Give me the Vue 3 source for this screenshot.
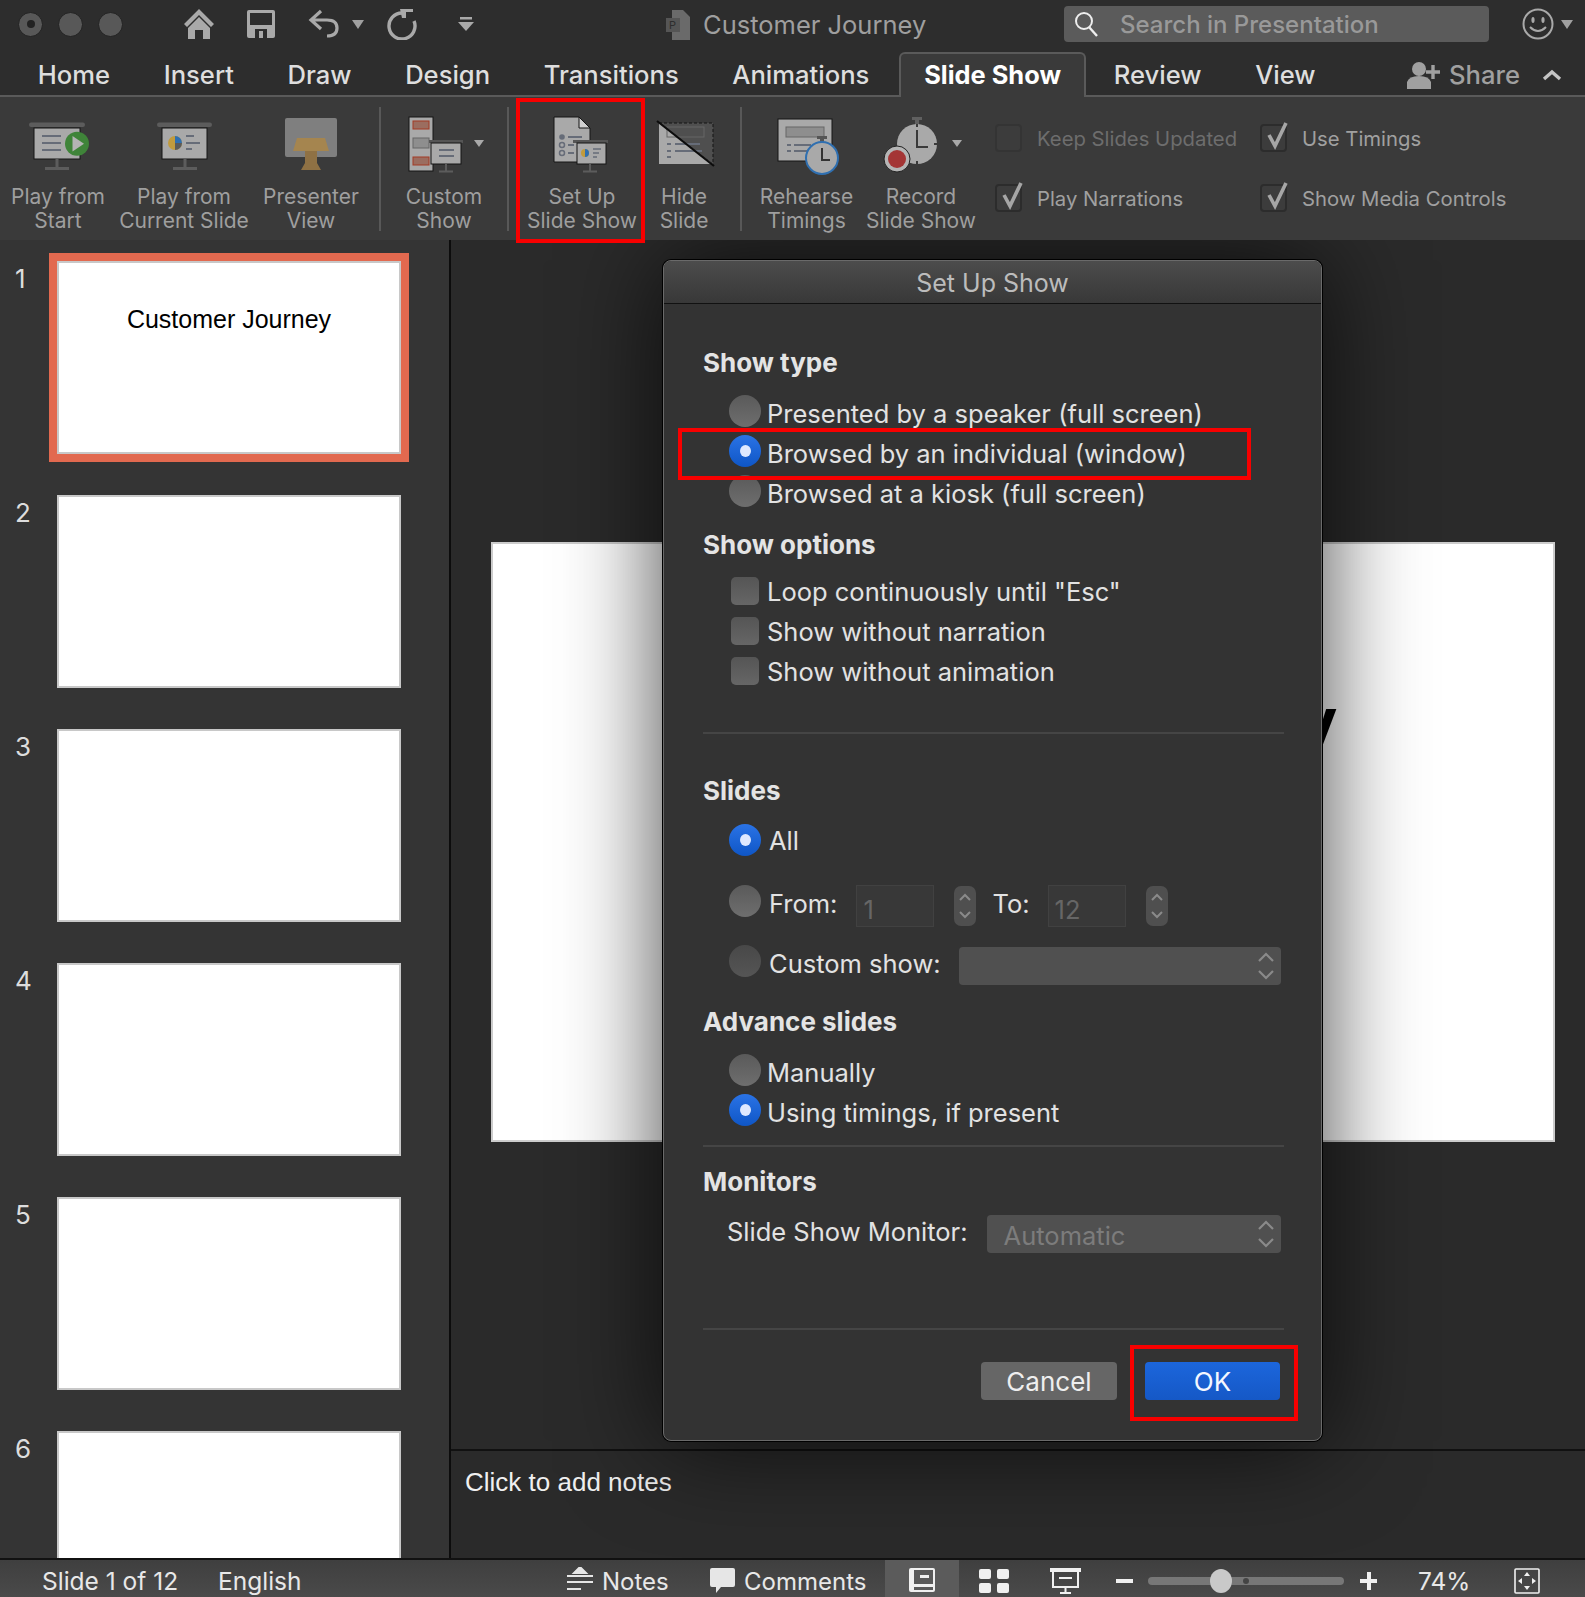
<template>
  <div class="app">
    <!-- title bar -->
    <header class="titlebar">
      <div class="lights">
        <span class="light"><i></i></span>
        <span class="light"></span>
        <span class="light"></span>
      </div>
      <div class="quick">
        <svg class="q-home" width="32" height="32" viewBox="0 0 32 32">
          <path d="M16 1 L1 16 L4 19 L16 7 L28 19 L31 16 Z" fill="#a9a9a9" />
          <path d="M5 20 L16 9 L27 20 V31 H20 V22 H12 V31 H5 Z" fill="#a9a9a9" />
        </svg>
        <svg class="q-save" width="30" height="30" viewBox="0 0 30 30">
          <path d="M1 3 Q1 1 3 1 H27 Q29 1 29 3 V27 Q29 29 27 29 H3 Q1 29 1 27 Z" fill="#a9a9a9" />
          <rect x="4" y="4" width="22" height="12" fill="#2d2d2d" />
          <rect x="9" y="20" width="12" height="9" fill="#2d2d2d" />
          <rect x="13" y="22" width="4" height="7" fill="#a9a9a9" />
        </svg>
        <svg class="q-undo" width="32" height="30" viewBox="0 0 32 30">
          <path d="M13 2 L3 11 L13 20 M3 11 H19 Q29 11 29 19 Q29 27 19 27" fill="none" stroke="#a9a9a9" stroke-width="3.2" />
        </svg>
        <span class="caret q-caret"></span>
        <svg class="q-redo" width="32" height="32" viewBox="0 0 32 32">
          <path d="M15 5 A13 13 0 1 0 27 13" fill="none" stroke="#a9a9a9" stroke-width="3.4" />
          <path d="M13 1 H26 V4 H19 V10 H15 Z" fill="#a9a9a9" />
        </svg>
        <svg class="q-more" width="16" height="16" viewBox="0 0 16 16">
          <rect x="2" y="1" width="12" height="2.5" fill="#a9a9a9" />
          <path d="M0 6 H16 L8 15 Z" fill="#a9a9a9" />
        </svg>
      </div>
      <div class="doc-title">
        <svg width="24" height="30" viewBox="0 0 24 30">
          <path d="M6 0 H17 L24 7 V30 H6 Z" fill="#6a6a6a" />
          <rect x="0" y="8" width="14" height="14" fill="#555" />
          <text x="3" y="19" font-size="11" font-family="Inter" fill="#2d2d2d">P</text>
        </svg>
        <span>Customer Journey</span>
      </div>
      <div class="search">
        <svg width="26" height="26" viewBox="0 0 26 26">
          <circle cx="11" cy="10" r="8" fill="none" stroke="#eee" stroke-width="2" />
          <path d="M16 16 L24 25" stroke="#eee" stroke-width="2.4" />
        </svg>
        <span>Search in Presentation</span>
      </div>
      <div class="smiley">
        <svg width="32" height="32" viewBox="0 0 32 32">
          <circle cx="16" cy="16" r="14.5" fill="none" stroke="#a9a9a9" stroke-width="2" />
          <ellipse cx="11" cy="12" rx="1.6" ry="3" fill="#a9a9a9" />
          <ellipse cx="21" cy="12" rx="1.6" ry="3" fill="#a9a9a9" />
          <path d="M8 19 Q16 27 24 19" fill="none" stroke="#a9a9a9" stroke-width="2" />
        </svg>
        <span class="caret"></span>
      </div>
    </header>

    <!-- tabs -->
    <nav class="tabs">
      <span v-for="t in tabs" :key="t" class="tab" :class="{ active: t === 'Slide Show' }">{{ t }}</span>
      <div class="share">
        <svg width="34" height="28" viewBox="0 0 34 28">
          <circle cx="12" cy="8" r="7" fill="#a0a0a0" />
          <path d="M0 28 V21 Q2 15 12 15 Q22 15 24 21 V28 Z" fill="#a0a0a0" />
          <path d="M26 4 V18 M19 11 H33" stroke="#a0a0a0" stroke-width="3.4" />
        </svg>
        <span>Share</span>
        <svg class="collapse" width="20" height="12" viewBox="0 0 20 12">
          <path d="M2 10 L10 3 L18 10" fill="none" stroke="#c4c4c4" stroke-width="3.4" />
        </svg>
      </div>
    </nav>

    <!-- ribbon -->
    <section class="ribbon">
      <div class="rb w116">
        <svg class="ico" width="80" height="64" viewBox="0 0 80 64">
          <rect x="11" y="6.5" width="56" height="4.5" rx="2.2" fill="#5c5c5c" />
          <rect x="16" y="12" width="46" height="31" fill="#a9a9a9" stroke="#151515" />
          <path d="M39 43 V52 M27 52.5 H51" stroke="#5c5c5c" stroke-width="3" />
          <path d="M24 20 H43 M24 27 H43 M24 34 H43" stroke="#666c78" stroke-width="2" />
          <circle cx="59" cy="27.7" r="12" fill="#3f8439" />
          <path d="M54.5 20 L66 27.7 L54.5 35.5 Z" fill="#b4b4b4" />
        </svg>
        <span>Play from<br />Start</span>
      </div>
      <div class="rb w136">
        <svg class="ico" width="80" height="64" viewBox="0 0 80 64">
          <rect x="13" y="6.5" width="55" height="4.5" rx="2.2" fill="#5c5c5c" />
          <rect x="18" y="12" width="45" height="31" fill="#a9a9a9" stroke="#151515" />
          <path d="M41 43 V52 M29 52.5 H53" stroke="#5c5c5c" stroke-width="3" />
          <circle cx="31" cy="27" r="7" fill="#c19b3d" />
          <path d="M31 20 A7 7 0 0 1 38 27 H31 Z" fill="#2f6fb0" />
          <path d="M31 27 H38 A7 7 0 0 1 31 34 Z" fill="#5a5a5a" />
          <path d="M42 20 H50 M42 27 H56 M42 33 H48" stroke="#666c78" stroke-width="2" />
        </svg>
        <span>Play from<br />Current Slide</span>
      </div>
      <div class="rb w118">
        <svg class="ico" width="80" height="64" viewBox="0 0 80 64">
          <rect x="14" y="2" width="52" height="39" rx="2" fill="#7f7f7f" />
          <path d="M26 22 H54 L58 35 H22 Z" fill="#a5854f" />
          <path d="M34 35 H46 V47 L50 54 H30 L34 47 Z" fill="#8f7144" />
        </svg>
        <span>Presenter<br />View</span>
      </div>
      <div class="rb-sep"></div>
      <div class="rb w106">
        <svg class="ico" width="80" height="64" viewBox="0 0 80 64">
          <rect x="5" y="1" width="24" height="54" fill="#a9a9a9" stroke="#151515" />
          <rect x="9" y="5" width="16" height="8" fill="#9b6d60" stroke="#a33b25" />
          <rect x="9" y="22" width="16" height="10" fill="#8e8e8e" stroke="#666" />
          <rect x="9" y="41" width="16" height="8" fill="#9b6d60" stroke="#a33b25" />
          <rect x="25" y="24" width="34" height="3" fill="#555" />
          <rect x="27" y="27" width="30" height="21" fill="#a9a9a9" stroke="#151515" />
          <path d="M35 34 H50 M35 40 H50" stroke="#666c78" stroke-width="2" />
          <path d="M42 48 V55 M35 55.5 H49" stroke="#5c5c5c" stroke-width="2" />
          <path d="M70 24 H80 L75 31 Z" fill="#a9a9a9" />
        </svg>
        <span>Custom<br />Show</span>
      </div>
      <div class="rb-sep sep2"></div>
      <div class="rb w124">
        <svg class="ico" width="80" height="64" viewBox="0 0 80 64">
          <path d="M12 1 H37 L48 12 V46 H12 Z" fill="#a9a9a9" stroke="#151515" />
          <path d="M37 1 V12 H48 Z" fill="#d0d0d0" stroke="#151515" />
          <circle cx="20" cy="21" r="2.8" fill="#666c78" />
          <circle cx="20" cy="29" r="2.5" fill="none" stroke="#666c78" stroke-width="1.5" />
          <circle cx="20" cy="37" r="2.5" fill="none" stroke="#666c78" stroke-width="1.5" />
          <path d="M26 21 H40 M26 29 H32 M26 37 H32" stroke="#666c78" stroke-width="1.8" />
          <rect x="31" y="24" width="35" height="3" fill="#555" />
          <rect x="35" y="27" width="29" height="21" fill="#a9a9a9" stroke="#151515" />
          <circle cx="43" cy="37" r="4" fill="#c19b3d" />
          <path d="M43 33 A4 4 0 0 1 43 41 Z" fill="#2f6fb0" />
          <path d="M51 33 H59 M51 37 H57 M51 41 H55" stroke="#666c78" stroke-width="1.6" />
          <path d="M48 48 V55 M41 55.5 H55" stroke="#5c5c5c" stroke-width="2" />
        </svg>
        <span>Set Up<br />Slide Show</span>
      </div>
      <div class="rb w80">
        <svg class="ico" width="80" height="64" viewBox="0 0 80 64">
          <path d="M15 7 H69 V48 Z" fill="#4f4f4f" stroke="#151515" stroke-dasharray="3 2" />
          <path d="M15 7 V48 H69 Z" fill="#a9a9a9" />
          <rect x="23" y="11" width="37" height="10" fill="none" stroke="#666" />
          <path d="M23 28 H27 M31 28 H56 M23 35 H27 M31 35 H58 M23 41 H27" stroke="#666c78" stroke-width="1.8" />
          <path d="M13 5 L70 50" stroke="#0c0c0c" stroke-width="2.2" />
        </svg>
        <span>Hide<br />Slide</span>
      </div>
      <div class="rb-sep sep3"></div>
      <div class="rb w99">
        <svg class="ico" width="80" height="64" viewBox="0 0 80 64">
          <rect x="11" y="3" width="54" height="42" fill="#a9a9a9" stroke="#151515" />
          <rect x="19" y="11" width="38" height="10" fill="#8e8e8e" stroke="#666" />
          <path d="M20 29 H24 M27 29 H44 M20 35 H24 M27 35 H40" stroke="#666c78" stroke-width="1.8" />
          <rect x="50" y="20" width="10" height="3" fill="#555" />
          <rect x="53" y="23" width="4" height="4" fill="#555" />
          <circle cx="55" cy="42" r="16" fill="#a9a9a9" stroke="#2f6fb0" stroke-width="2" />
          <path d="M55 32 V44 H63" fill="none" stroke="#333" stroke-width="2" />
        </svg>
        <span>Rehearse<br />Timings</span>
      </div>
      <div class="rb w130">
        <svg class="ico" width="80" height="64" viewBox="0 0 80 64">
          <rect x="31" y="1" width="10" height="3" fill="#606060" />
          <rect x="34" y="4" width="4" height="5" fill="#606060" />
          <circle cx="36" cy="28" r="20" fill="#a9a9a9" />
          <path d="M36 14 V31 H47" fill="none" stroke="#3a3a3a" stroke-width="2" />
          <path d="M36 8 V11 M36 45 V48 M53 28 H56" stroke="#3a3a3a" stroke-width="2" />
          <circle cx="16" cy="43" r="13" fill="#b5b5b5" stroke="#222" />
          <circle cx="16" cy="43" r="9" fill="#a43535" />
          <path d="M71 24 H81 L76 31 Z" fill="#a9a9a9" />
        </svg>
        <span>Record<br />Slide Show</span>
      </div>
      <div class="opts">
        <label v-for="o in ribbonOpts" :key="o.label" class="opt" :class="{ off: o.off }">
          <span class="opt-box">
            <svg v-if="!o.off" width="26" height="30" viewBox="0 0 26 30">
              <path d="M6 14 L12 25 L23 2" fill="none" stroke="#a6a6a6" stroke-width="3.6" />
            </svg>
          </span>
          {{ o.label }}
        </label>
      </div>
    </section>

    <!-- body -->
    <div class="main">
      <aside class="sidebar">
        <div v-for="n in 6" :key="n" class="thumb-row">
          <span class="num">{{ n }}</span>
          <div class="thumb" :class="{ selected: n === 1 }">
            <span v-if="n === 1">Customer Journey</span>
          </div>
        </div>
      </aside>

      <div class="workspace">
        <div class="canvas">
          <div class="slide"><h1>Customer Journey</h1></div>
        </div>
        <div class="notes">Click to add notes</div>

        <div class="dialog">
          <div class="dlg-title">Set Up Show</div>
          <div class="dlg-body">
            <h3 class="h-first">Show type</h3>
            <div class="group g1">
              <div v-for="r in showTypes" :key="r.label" class="row">
                <span class="radio up" :class="{ on: r.on }"></span>{{ r.label }}
              </div>
            </div>

            <h3 class="h-opts">Show options</h3>
            <div class="group g2">
              <div v-for="c in showOptions" :key="c" class="row">
                <span class="check"></span>{{ c }}
              </div>
            </div>
            <div class="rule r1"></div>

            <h3 class="h-slides">Slides</h3>
            <div class="group g3">
              <div class="row wide"><span class="radio on"></span>All</div>
              <div class="row wide from">
                <span class="radio up"></span>From:
                <span class="field f1">1</span>
                <span class="stepper">
                  <svg width="12" height="32" viewBox="0 0 12 32">
                    <path d="M1 10 L6 5 L11 10 M1 22 L6 27 L11 22" fill="none" stroke="#8a8a8a" stroke-width="2" />
                  </svg>
                </span>
                <span class="to">To:</span>
                <span class="field f2">12</span>
                <span class="stepper">
                  <svg width="12" height="32" viewBox="0 0 12 32">
                    <path d="M1 10 L6 5 L11 10 M1 22 L6 27 L11 22" fill="none" stroke="#8a8a8a" stroke-width="2" />
                  </svg>
                </span>
              </div>
              <div class="row wide custom">
                <span class="radio up dim"></span>Custom show:
                <span class="select sel-custom">
                  <svg class="updown" width="16" height="30" viewBox="0 0 16 30">
                    <path d="M1 10 L8 3 L15 10 M1 20 L8 27 L15 20" fill="none" stroke="#8a8a8a" stroke-width="2.2" />
                  </svg>
                </span>
              </div>
            </div>

            <h3 class="h-adv">Advance slides</h3>
            <div class="group g4">
              <div class="row"><span class="radio up"></span>Manually</div>
              <div class="row"><span class="radio up on"></span>Using timings, if present</div>
            </div>
            <div class="rule r2"></div>

            <h3 class="h-mon">Monitors</h3>
            <div class="row monitor">
              Slide Show Monitor:
              <span class="select sel-mon">Automatic
                <svg class="updown" width="16" height="30" viewBox="0 0 16 30">
                  <path d="M1 10 L8 3 L15 10 M1 20 L8 27 L15 20" fill="none" stroke="#8a8a8a" stroke-width="2.2" />
                </svg>
              </span>
            </div>
            <div class="rule r3"></div>

            <div class="buttons">
              <button class="btn">Cancel</button>
              <button class="btn primary">OK</button>
            </div>
          </div>
        </div>
      </div>
    </div>

    <!-- status bar -->
    <footer class="status">
      <span class="st-slide">Slide 1 of 12</span>
      <span class="st-lang">English</span>
      <svg class="st-notes" width="28" height="26" viewBox="0 0 28 26">
        <path d="M14 0 L20 6 H8 Z M1 9 H27 M1 15 H27 M1 22 H15" fill="#e6e6e6" stroke="#e6e6e6" stroke-width="2" />
      </svg>
      <span class="st-label">Notes</span>
      <svg class="st-comments" width="27" height="27" viewBox="0 0 27 27">
        <path d="M3 1 H24 Q26 1 26 3 V18 Q26 20 24 20 H12 L7 26 V20 H3 Q1 20 1 18 V3 Q1 1 3 1 Z" fill="#e6e6e6" />
      </svg>
      <span class="st-label st-c">Comments</span>
      <div class="view-btn">
        <svg width="28" height="26" viewBox="0 0 28 26">
          <rect x="1" y="1" width="26" height="24" rx="2" fill="#f0f0f0" />
          <rect x="6" y="3" width="19" height="14" fill="#5a5a5a" />
          <rect x="12" y="8" width="9" height="3" fill="#f0f0f0" />
          <rect x="6" y="20" width="19" height="3" fill="#5a5a5a" />
        </svg>
      </div>
      <svg class="st-grid" width="30" height="24" viewBox="0 0 30 24">
        <rect x="0" y="0" width="12" height="10" rx="2" fill="#f0f0f0" />
        <rect x="18" y="0" width="12" height="10" rx="2" fill="#f0f0f0" />
        <rect x="0" y="14" width="12" height="10" rx="2" fill="#f0f0f0" />
        <rect x="18" y="14" width="12" height="10" rx="2" fill="#f0f0f0" />
      </svg>
      <svg class="st-show" width="31" height="26" viewBox="0 0 31 26">
        <rect x="0" y="0" width="31" height="4" fill="#f0f0f0" />
        <path d="M3 3 V19 H28 V3" fill="none" stroke="#f0f0f0" stroke-width="2" />
        <path d="M9 10 H22 M15.5 19 V25 M10 25 H21" stroke="#f0f0f0" stroke-width="2" />
      </svg>
      <span class="st-minus"></span>
      <div class="zoom-track"><span class="zoom-tick"></span><span class="zoom-thumb"></span></div>
      <span class="st-plus"></span>
      <span class="st-pct">74%</span>
      <svg class="st-fit" width="26" height="26" viewBox="0 0 26 26">
        <rect x="1" y="1" width="24" height="24" rx="1" fill="none" stroke="#f0f0f0" stroke-width="1.6" />
        <path d="M13 4 L10 8 H16 Z M13 22 L10 18 H16 Z M4 13 L8 10 V16 Z M22 13 L18 10 V16 Z" fill="#f0f0f0" />
      </svg>
    </footer>

    <!-- red callouts drawn on top of the screenshot -->
    <div class="mark m-setup"></div>
    <div class="mark m-browsed"></div>
    <div class="mark m-ok"></div>
  </div>
</template>

<script setup>
const tabs = ['Home', 'Insert', 'Draw', 'Design', 'Transitions', 'Animations', 'Slide Show', 'Review', 'View'];

const ribbonOpts = [
  { label: 'Keep Slides Updated', off: true },
  { label: 'Use Timings' },
  { label: 'Play Narrations' },
  { label: 'Show Media Controls' },
];

const showTypes = [
  { label: 'Presented by a speaker (full screen)' },
  { label: 'Browsed by an individual (window)', on: true },
  { label: 'Browsed at a kiosk (full screen)' },
];

const showOptions = ['Loop continuously until "Esc"', 'Show without narration', 'Show without animation'];
</script>

<style>
html, body { margin: 0; background: #262626; }
</style>

<style scoped>
.app {
  position: relative;
  width: 1585px;
  height: 1597px;
  overflow: hidden;
  display: flex;
  flex-direction: column;
  font-family: Inter, "Liberation Sans", sans-serif;
  background: #2d2d2d;
}

/* title bar */
.titlebar { height: 48px; display: flex; align-items: center; flex: none; }
.lights { display: flex; gap: 15px; margin-left: 18px; width: 165px; }
.light {
  width: 25px; height: 25px; border-radius: 50%;
  background: #585858; border: 1px solid #222; box-sizing: border-box;
  display: flex; align-items: center; justify-content: center;
}
.light i { width: 8px; height: 8px; border-radius: 50%; background: #222; }
.quick { display: flex; align-items: center; width: 483px; }
.q-save { margin-left: 31px; }
.q-undo { margin-left: 32px; }
.q-caret { margin-left: 12px; }
.q-redo { margin-left: 23px; }
.q-more { margin-left: 39px; }
.caret { width: 0; height: 0; border-left: 6px solid transparent; border-right: 6px solid transparent; border-top: 9px solid #a0a0a0; }
.doc-title { display: flex; align-items: center; gap: 13px; width: 398px; font-size: 25.5px; color: #9f9f9f; padding-top: 1px; box-sizing: border-box; }
.search {
  width: 425px; height: 36px; box-sizing: border-box; background: #5b5b5b; border-radius: 4px;
  display: flex; align-items: center; padding-left: 9px; gap: 21px;
  font-size: 24px; font-weight: 500; color: #999;
}
.smiley { display: flex; align-items: center; gap: 7px; margin-left: 33px; }

/* tabs */
.tabs {
  height: 49px; flex: none; box-sizing: border-box; display: flex; align-items: flex-start;
  padding-left: 11px; border-bottom: 2px solid #5a5a5a; font-size: 25.6px; font-weight: 500; color: #dedede;
}
.tab { padding: 0 26.8px; line-height: 53px; height: 47px; }
.tab.active {
  position: relative; margin: 4px 1px 0 3px; height: 43px; line-height: 42px;
  padding: 0 23px; background: #3a3a3a; color: #fff; font-weight: 700; font-size: 25.4px;
  border: 2px solid #5a5a5a; border-bottom: none; border-radius: 6px 6px 0 0;
}
.share { margin-left: auto; display: flex; align-items: center; gap: 8px; color: #a0a0a0; padding-right: 23px; height: 53px; }
.collapse { margin-left: 14px; }

/* ribbon */
.ribbon { height: 143px; flex: none; background: #3a3a3a; display: flex; padding-top: 0; box-sizing: border-box; }
.rb {
  flex: none; display: flex; flex-direction: column; align-items: center; padding-top: 19px;
  font-size: 21px; line-height: 24px; color: #9f9f9f; text-align: center; white-space: nowrap;
}
.rb .ico { margin-bottom: 5px; overflow: visible; }
.w116 { width: 116px; } .w136 { width: 136px; } .w118 { width: 118px; } .w106 { width: 106px; }
.w124 { width: 124px; } .w80 { width: 80px; } .w99 { width: 99px; } .w130 { width: 130px; }
.rb-sep { width: 2px; height: 124px; background: #585858; margin: 10px 10px 0 9px; flex: none; }
.sep2 { margin: 10px 11px 0 10px; }
.sep3 { margin: 10px 15px 0 16px; }
.opts {
  display: grid; grid-template-columns: 265px auto; row-gap: 32px; margin-left: 9px; padding-top: 27px;
  align-content: start;
}
.opt { display: flex; align-items: center; height: 28px; gap: 15px; font-size: 20.3px; color: #a0a0a0; }
.opt.off { color: #6d6d6d; }
.opt-box {
  position: relative; width: 27px; height: 28px; box-sizing: border-box; border-radius: 4px;
  border: 2px solid #2c2c2c; background: #3c3c3c;
}
.opt.off .opt-box { border-color: #343434; }
.opt-box svg { position: absolute; left: 1px; top: -5px; }

/* body */
.main { flex: 1; display: flex; min-height: 0; }
.sidebar {
  width: 451px; flex: none; box-sizing: border-box; background: #343434; border-right: 2px solid #0c0c0c; overflow: hidden;
  padding-top: 21px;
}
.thumb-row { position: relative; height: 234px; display: flex; padding-left: 57px; }
.num { position: absolute; left: 15px; top: 0; font-size: 26px; line-height: 36px; color: #ddd; }
.thumb {
  width: 344px; height: 193px; box-sizing: border-box; background: #fff; border: 2px solid #c8c8c8; flex: none;
  text-align: center; font-family: "Liberation Sans", sans-serif; font-size: 25px; color: #000; line-height: 112px;
}
.thumb.selected { outline: 8px solid #e2694f; outline-offset: 0; }

.workspace { position: relative; flex: 1; min-width: 0; display: flex; flex-direction: column; overflow: hidden; }
.canvas { flex: 1; background: #2a2a2a; padding: 302px 30px 0 40px; min-height: 0; }
.slide {
  height: 600px; background: #fff; box-sizing: border-box; border: 2px solid #ccc;
  display: flex; justify-content: center; padding-top: 138px;
}
.slide h1 { margin: 0; font-family: "Liberation Sans", sans-serif; font-size: 71px; line-height: 80px; color: #000; font-weight: 700; white-space: nowrap; }
.notes {
  flex: none; height: 109px; box-sizing: border-box; border-top: 2px solid #111; background: #2a2a2a;
  padding: 15px 0 0 14px; font-family: "Liberation Sans", sans-serif; font-size: 26px; line-height: 32px; color: #f0f0f0;
}

/* dialog */
.dialog {
  position: absolute; left: 212px; top: 20px; width: 659px; height: 1181px; box-sizing: border-box;
  background: #333; border: 1px solid #6a6a6a; border-radius: 8px;
  box-shadow: 0 0 0 1px #000, 0 0 100px rgba(0, 0, 0, .75); display: flex; flex-direction: column;
}
.dlg-title {
  height: 43px; flex: none; box-sizing: border-box; text-align: center; line-height: 44px; font-size: 25px; color: #bcbcbc;
  background: linear-gradient(#4c4c4c, #383838); border-bottom: 1px solid #111; border-radius: 7px 7px 0 0;
}
.dlg-body { padding: 0 37px 0 39px; font-size: 25.5px; color: #e2e2e2; }
h3 { margin: 0; font-size: 26px; line-height: 30px; font-weight: 700; color: #e4e4e4; }
.h-first { margin-top: 44px; }
.h-opts { margin-top: 17px; }
.h-slides { margin-top: 42px; }
.h-adv { margin-top: 24px; }
.h-mon { margin-top: 20px; }
.group { padding-left: 26px; }
.g1 { margin-top: 15px; }
.g2 { margin-top: 11px; }
.g3 { margin-top: 14px; }
.g4 { margin-top: 15px; }
.row { height: 40px; display: flex; align-items: center; white-space: nowrap; }
.radio {
  width: 32px; height: 32px; border-radius: 50%; flex: none; margin-right: 6px; box-sizing: border-box;
  background: linear-gradient(#5a5a5a, #6e6e6e); display: flex; align-items: center; justify-content: center;
}
.radio.up { margin-top: -4px; }
.radio.dim { background: linear-gradient(#484848, #555); }
.radio.on { background: linear-gradient(#2a73e6, #0f56c6); }
.radio.on::after { content: ""; width: 11px; height: 12px; border-radius: 50%; background: #dfe9ff; }
.check {
  width: 28px; height: 28px; border-radius: 5px; flex: none; margin: 0 8px 0 2px;
  background: linear-gradient(#555, #666);
}
.rule { height: 2px; background: #454545; }
.r1 { margin-top: 41px; }
.r2 { margin-top: 13px; }
.r3 { margin-top: 77px; }
.wide .radio { margin-right: 8px; }
.from { margin-top: 23px; }
.custom { margin-top: 20px; }
.field {
  position: relative; top: 3px; width: 78px; height: 42px; box-sizing: border-box; background: #383838; border: 1px solid #414141;
  color: #666; padding: 8px 0 0 6px; line-height: 32px;
}
.field.f1 { margin-left: 19px; }
.field.f2 { margin-left: 18px; }
.stepper {
  position: relative; top: 3px; width: 22px; height: 40px; border-radius: 7px; background: #4f4f4f; margin-left: 20px;
  display: flex; align-items: center; justify-content: center;
}
.to { margin-left: 16px; }
.select {
  position: relative; top: 3px; height: 38px; box-sizing: border-box; background: #505050; border-radius: 4px; display: block;
}
.sel-custom { width: 322px; margin-left: 18px; }
.sel-mon { width: 294px; margin-left: 19px; padding-left: 17px; line-height: 41px; color: #7c7c7c; }
.updown { position: absolute; right: 7px; top: 4px; }
.monitor { margin-top: 14px; padding-left: 24px; }
.buttons { display: flex; justify-content: flex-end; gap: 28px; margin: 32px 4px 0 0; }
.btn {
  width: 136px; height: 38px; border: none; border-radius: 4px; background: #666; color: #eee;
  font: 26px Inter, sans-serif; padding: 0; line-height: 40px;
}
.btn.primary { width: 135px; background: linear-gradient(#1c66dc, #1558c6); color: #f4f7ff; }

/* status */
.status {
  height: 39px; flex: none; position: relative; display: flex; align-items: center; box-sizing: border-box;
  border-top: 2px solid #111; padding-top: 5px; background: linear-gradient(#3f3f3f, #4a4a4a); font-size: 24.5px; color: #e8e8e8;
}
.st-slide { margin-left: 42px; width: 176px; }
.st-lang { width: 348px; }
.st-label { margin-left: 8px; width: 107px; font-size: 24px; }
.st-c { margin-left: 8px; width: 141px; }
.st-notes { margin-top: -2px; }
.st-comments { margin-top: -2px; }
.view-btn {
  width: 74px; align-self: stretch; margin-top: -5px; background: #5b5b5b; display: flex; align-items: center; justify-content: center; flex: none; padding-top: 3px; box-sizing: border-box;
}
.st-grid { margin-left: 20px; }
.st-show { margin-left: 41px; }
.st-minus { width: 17px; height: 4px; background: #f0f0f0; margin-left: 35px; }
.zoom-track {
  position: relative; width: 196px; height: 8px; border-radius: 4px; background: #777; margin-left: 15px;
}
.zoom-thumb { position: absolute; left: 62px; top: -8px; width: 22px; height: 24px; border-radius: 50%; background: #c9c9c9; }
.zoom-tick { position: absolute; left: 95px; top: 1px; width: 6px; height: 6px; border-radius: 50%; background: #444; }
.st-plus { position: relative; width: 17px; height: 4px; background: #f0f0f0; margin-left: 16px; }
.st-plus::after { content: ""; position: absolute; left: 6.5px; top: -7px; width: 4px; height: 18px; background: #f0f0f0; }
.st-pct { margin-left: 41px; width: 96px; }

/* callouts */
.mark { position: absolute; box-sizing: border-box; border: 4px solid #f80000; }
.m-setup { left: 516px; top: 98px; width: 129px; height: 145px; }
.m-browsed { left: 678px; top: 428px; width: 573px; height: 52px; }
.m-ok { left: 1130px; top: 1345px; width: 168px; height: 76px; }
</style>
